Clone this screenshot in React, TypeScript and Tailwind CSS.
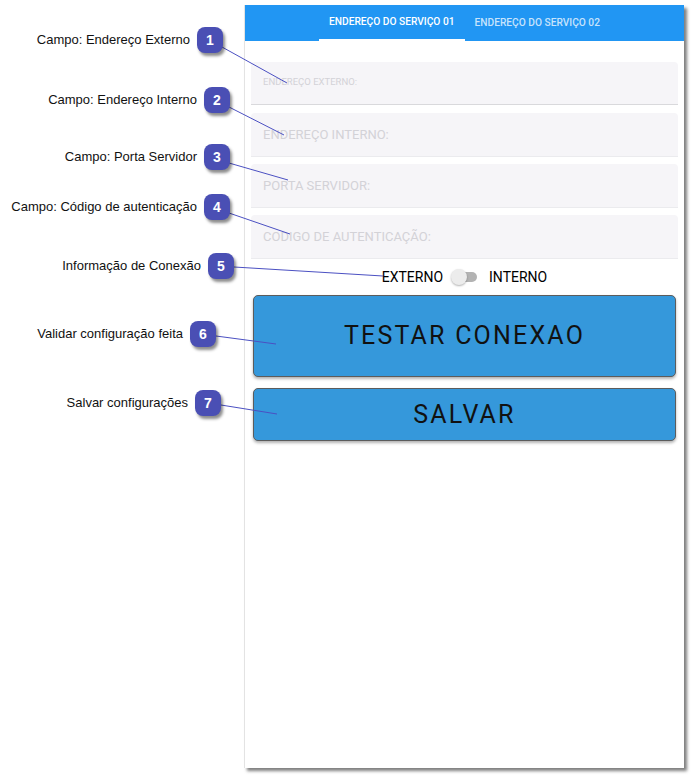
import React from 'react';

type Callout = {
  n: number;
  label: string;
  pos: string; // classes for top/right of the callout row
};

const callouts: Callout[] = [
  { n: 1, label: 'Campo: Endereço Externo', pos: 'top-[27px] right-[21px]' },
  { n: 2, label: 'Campo: Endereço Interno', pos: 'top-[87px] right-[14px]' },
  { n: 3, label: 'Campo: Porta Servidor', pos: 'top-[144px] right-[14px]' },
  { n: 4, label: 'Campo: Código de autenticação', pos: 'top-[194px] right-[14px]' },
  { n: 5, label: 'Informação de Conexão', pos: 'top-[253px] right-[10px]' },
  { n: 6, label: 'Validar configuração feita', pos: 'top-[321px] right-[28px]' },
  { n: 7, label: 'Salvar configurações', pos: 'top-[390px] right-[23px]' },
];

// leader lines: badge -> target in the phone screen
const lines = [
  [222, 47, 287, 83],
  [229, 107, 284, 135],
  [229, 163, 288, 180],
  [229, 213, 290, 234],
  [234, 267, 383, 276],
  [216, 336, 276, 344],
  [221, 405, 277, 414],
];

const Field = ({ label, first }: { label: string; first?: boolean }) => {
  if (first) {
    return (
      <div className="h-[43px] bg-[#f6f5f8] rounded-t-[4px] border-b border-[#d9d9dc] px-[12px] pt-[6px]">
        <span className="text-[9.5px] text-[#d3d2d7]">{label}</span>
      </div>
    );
  }
  return (
    <div className="h-[44px] bg-[#f6f5f8] rounded-t-[4px] border-b border-[#ebebee] px-[12px] flex items-center">
      <span className="text-[13px] text-[#d3d2d7]">{label}</span>
    </div>
  );
};

export default function App() {
  return (
    <div className="relative w-[693px] h-[777px] bg-white flex overflow-hidden">
      {/* annotation column */}
      <div className="relative w-[244px] shrink-0 font-['Liberation_Sans',Arial,sans-serif]">
        {callouts.map((c) => (
          <div key={c.n} className={`absolute flex items-center gap-[7px] ${c.pos}`}>
            <span className="text-[13px] text-[#111] whitespace-nowrap">{c.label}</span>
            <div className="relative z-10 w-[26px] h-[26px] rounded-[8px] bg-[#4a4fb4] text-white font-bold text-[14px] flex items-center justify-center shadow-[2px_3px_3px_rgba(0,0,0,0.45)]">
              {c.n}
            </div>
          </div>
        ))}
      </div>

      {/* phone screen */}
      <div className="mt-[5px] w-[440px] h-[763px] bg-white border-l border-[#e3e3e3] shadow-[3px_3px_3px_rgba(0,0,0,0.5)] flex flex-col font-['Roboto',sans-serif]">
        <div className="h-[36px] bg-[#2196f3] flex justify-center">
          <div className="h-full px-[10px] flex items-center border-b-2 border-white text-[10.2px] font-medium text-white">
            ENDEREÇO DO SERVIÇO 01
          </div>
          <div className="h-full px-[10px] flex items-center text-[10.2px] font-medium text-white/75">
            ENDEREÇO DO SERVIÇO 02
          </div>
        </div>

        <div className="px-[6px] pt-[21px] flex flex-col">
          <Field label="ENDEREÇO EXTERNO:" first />
          <div className="mt-[8px] flex flex-col gap-[7px]">
            <Field label="ENDEREÇO INTERNO:" />
            <Field label="PORTA SERVIDOR:" />
            <Field label="CODIGO DE AUTENTICAÇÃO:" />
          </div>

          <div className="mt-[6px] h-[24px] flex items-center justify-center text-[14px] text-black">
            <span>EXTERNO</span>
            <div className="relative ml-[8px] mr-[12px] w-[26px] h-[16px] flex items-center">
              <div className="absolute left-[4px] right-0 h-[10px] rounded-full bg-[#b3b3b3]" />
              <div className="relative w-[16px] h-[16px] rounded-full bg-[#ececec] shadow-[0_1px_2px_rgba(0,0,0,0.3)]" />
            </div>
            <span>INTERNO</span>
          </div>

          <button className="mt-[6px] mx-[2px] h-[82px] bg-[#3598db] border border-[#5c5c5c] rounded-[5px] shadow-[0_2px_3px_rgba(0,0,0,0.3)] text-[25px] tracking-[2.2px] text-[#111]">
            TESTAR CONEXAO
          </button>
          <button className="mt-[11px] mx-[2px] h-[53px] bg-[#3598db] border border-[#5c5c5c] rounded-[5px] shadow-[0_2px_3px_rgba(0,0,0,0.3)] text-[25px] tracking-[2.2px] text-[#111]">
            SALVAR
          </button>
        </div>
      </div>

      {/* leader lines */}
      <svg className="absolute inset-0 pointer-events-none" width="693" height="777">
        {lines.map(([x1, y1, x2, y2], i) => (
          <line key={i} x1={x1} y1={y1} x2={x2} y2={y2} stroke="#4b50c2" strokeWidth="1" />
        ))}
      </svg>
    </div>
  );
}
